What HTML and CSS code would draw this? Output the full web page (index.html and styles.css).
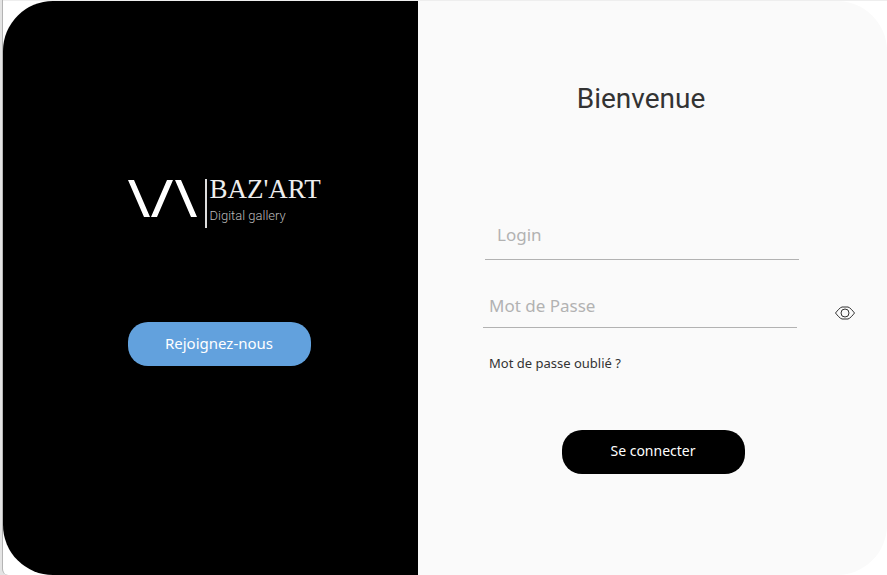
FILE: index.html
```html
<!DOCTYPE html>
<html lang="fr">
<head>
<meta charset="utf-8">
<meta name="viewport" content="width=device-width, initial-scale=1">
<title>Baz'Art</title>
<link rel="stylesheet" href="styles.css">
</head>
<body>
<main class="window">
  <div class="card">
    <section class="brand">
      <div class="logo">
        <svg class="logo-mark" width="70" height="38" viewBox="0 0 70 38" aria-hidden="true">
          <path d="M0 1H6L22 38H16ZM39 1H45L29 38H23ZM47 1H53L69 38H63Z" fill="#fff"/>
        </svg>
        <div class="logo-text">
          <span class="logo-name">BAZ'ART</span>
          <span class="logo-tagline">Digital gallery</span>
        </div>
      </div>
      <button class="button button-join" type="button">Rejoignez-nous</button>
    </section>
    <form class="login">
      <h1 class="title">Bienvenue</h1>
      <input class="field field-login" type="text" placeholder="Login" aria-label="Login">
      <div class="password-row">
        <input class="field field-password" type="password" placeholder="Mot de Passe" aria-label="Mot de Passe">
        <button class="reveal" type="button" aria-label="Afficher le mot de passe">
          <svg width="20" height="14" viewBox="0 0 20 14" fill="none" stroke="#333" aria-hidden="true">
            <path d="M.5 7C2.500 4.500 5 1.500 7 1H13C15 1.500 17.500 4.500 19.500 7C17.500 9.500 15 12.500 13 13H7C5 12.500 2.500 9.500 .5 7Z"/>
            <circle cx="10" cy="7" r="4"/>
          </svg>
        </button>
      </div>
      <a class="forgot" href="#">Mot de passe oublié ?</a>
      <button class="button button-submit" type="submit">Se connecter</button>
    </form>
  </div>
</main>
</body>
</html>
```
FILE: styles.css
```css
* {
  box-sizing: border-box;
}

body {
  margin: 0;
  background: #e4e4e4;
  font-family: "Noto Sans", "Open Sans", sans-serif;
}

.window {
  display: flex;
  min-height: 100vh;
  margin-left: 2px;
  padding-top: 1px;
  border-left: 1px solid #b4b4b4;
  border-bottom-left-radius: 6px;
  background: linear-gradient(#eee 1px, #fff 1px);
}

.card {
  display: grid;
  flex: 1;
  grid-template-columns: 415fr 469fr;
  overflow: hidden;
  border-radius: 50px;
}

.brand {
  display: flex;
  flex-direction: column;
  align-items: flex-start;
  gap: 94px;
  padding: 178px 0 0 30%;
  background: #000;
}

.logo {
  display: flex;
  gap: 7px;
}

.logo-text {
  display: flex;
  flex-direction: column;
  height: 49px;
  padding-left: 3px;
  border-left: 2px solid #ddd;
  color: #eee;
  white-space: nowrap;
}

.logo-name {
  font: 27px/20px "Liberation Serif", serif;
}

.logo-tagline {
  margin-top: 8px;
  color: #bbb;
  font: 300 13px/18px Roboto, sans-serif;
}

.button {
  width: 183px;
  height: 44px;
  padding: 0 0 2px;
  border: 0;
  border-radius: 20px;
  color: #fff;
  font: 15px/20px "Noto Sans", sans-serif;
  cursor: pointer;
}

.button-join {
  background: #62a1dd;
}

.login {
  display: flex;
  flex-direction: column;
  align-items: flex-start;
  padding: 80px 64px 0 65px;
  background: #fafafa;
}

.title {
  align-self: center;
  margin: 0 24px 93px 0;
  color: #333;
  font: 28px/36px Roboto, sans-serif;
}

.field {
  width: 314px;
  border: 0;
  border-bottom: 1px solid #b2b2b2;
  outline: 0;
  background: transparent;
  color: #333;
  font: 17px/24px "Noto Sans", sans-serif;
}

.field::placeholder {
  color: #b2b2b2;
  opacity: 1;
}

.field-login {
  height: 50px;
  margin-left: 2px;
  padding: 0 12px;
}

.password-row {
  display: flex;
  align-items: flex-end;
  justify-content: space-between;
  align-self: stretch;
  margin: 24px -32px 0 0;
}

.field-password {
  height: 44px;
  padding: 0 6px;
}

.reveal {
  display: flex;
  padding: 0 0 8px;
  border: 0;
  background: none;
  cursor: pointer;
}

.forgot {
  margin: 25px 0 0 6px;
  color: #333;
  font-size: 13px;
  line-height: 20px;
  text-decoration: none;
}

.button-submit {
  align-self: center;
  margin: 57px 0 0;
  background: #000;
  font-size: 14px;
}
```
